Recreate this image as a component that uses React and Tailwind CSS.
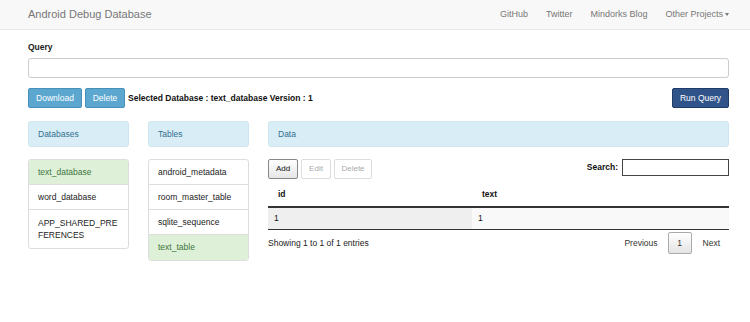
export default function App() {
  const font = { fontFamily: '"Liberation Sans", Arial, sans-serif' };
  return (
    <div className="w-[750px] h-[322px] bg-white text-[#333] text-[8.5px] overflow-hidden" style={font}>
      {/* navbar */}
      <nav className="h-[30px] bg-[#f8f8f8] border-b border-[#e7e7e7] flex items-center pl-[28px] pr-[21px]">
        <span className="text-[11px] text-[#777]">Android Debug Database</span>
        <div className="ml-auto flex items-center gap-[18px] text-[#777] text-[9px]">
          <span>GitHub</span>
          <span>Twitter</span>
          <span>Mindorks Blog</span>
          <span className="flex items-center gap-[2px]">
            Other Projects
            <span className="w-0 h-0 border-l-[2.5px] border-r-[2.5px] border-t-[3px] border-l-transparent border-r-transparent border-t-[#777]"></span>
          </span>
        </div>
      </nav>

      <div className="px-[28px] pr-[21px]">
        <div className="pt-[12px] font-bold text-[#222] leading-[10px]">Query</div>
        <div className="mt-[6px] h-[20px] border border-[#ccc] rounded-[3px] bg-white"></div>

        <div className="mt-[10px] flex items-center h-[20px]">
          <button className="h-[20px] w-[54px] bg-[#5ba7d0] border border-[#4790b9] rounded-[2px] text-white">Download</button>
          <button className="ml-[3px] h-[20px] w-[40px] bg-[#5ba7d0] border border-[#4790b9] rounded-[2px] text-white">Delete</button>
          <span className="ml-[3px] font-bold text-[#111]">Selected Database : text_database Version : 1</span>
          <button className="ml-auto h-[20px] w-[57px] bg-[#30538a] border border-[#1f3c68] rounded-[2px] text-white">Run Query</button>
        </div>

        <div className="mt-[13px] flex gap-[19px] items-start">
          {/* databases */}
          <div className="w-[101px]">
            <div className="h-[26px] bg-[#d9edf7] border border-[#cfe5f1] rounded-[3px] flex items-center px-[9px] text-[#31708f]">Databases</div>
            <div className="mt-[12px] border border-[#ddd] rounded-[3px] overflow-hidden">
              <div className="h-[25px] flex items-center px-[9px] bg-[#dff0d8] text-[#3c763d] border-b border-[#ddd]">text_database</div>
              <div className="h-[25px] flex items-center px-[9px] text-[#222] border-b border-[#ddd]">word_database</div>
              <div className="px-[9px] py-[7px] text-[#222] leading-[12px] break-all">APP_SHARED_PREFERENCES</div>
            </div>
          </div>

          {/* tables */}
          <div className="w-[101px]">
            <div className="h-[26px] bg-[#d9edf7] border border-[#cfe5f1] rounded-[3px] flex items-center px-[9px] text-[#31708f]">Tables</div>
            <div className="mt-[12px] border border-[#ddd] rounded-[3px] overflow-hidden">
              <div className="h-[25px] flex items-center px-[9px] text-[#222] border-b border-[#ddd]">android_metadata</div>
              <div className="h-[25px] flex items-center px-[9px] text-[#222] border-b border-[#ddd]">room_master_table</div>
              <div className="h-[25px] flex items-center px-[9px] text-[#222] border-b border-[#ddd]">sqlite_sequence</div>
              <div className="h-[25px] flex items-center px-[9px] bg-[#dff0d8] text-[#3c763d]">text_table</div>
            </div>
          </div>

          {/* data */}
          <div className="flex-1">
            <div className="h-[26px] bg-[#d9edf7] border border-[#cfe5f1] rounded-[3px] flex items-center px-[9px] text-[#31708f]">Data</div>
            <div className="mt-[12px] flex items-start">
              <button className="h-[20px] w-[30px] border border-[#888] rounded-[2px] bg-gradient-to-b from-white to-[#e6e6e6] text-[#111] text-[8px]">Add</button>
              <button className="ml-[3px] h-[20px] w-[30px] border border-[#ddd] rounded-[2px] bg-white text-[#aaa] text-[8px]">Edit</button>
              <button className="ml-[3px] h-[20px] w-[38px] border border-[#ddd] rounded-[2px] bg-white text-[#aaa] text-[8px]">Delete</button>
              <div className="ml-auto flex items-center h-[17px]">
                <span className="font-bold text-[#111]">Search:</span>
                <div className="ml-[4px] w-[107px] h-[17px] border-[1.5px] border-[#444] bg-white"></div>
              </div>
            </div>
            <div className="flex h-[29px] pt-[4px] items-center font-bold text-[#111] border-b-2 border-[#333]">
              <div className="w-[204px] pl-[10px]">id</div>
              <div className="pl-[10px]">text</div>
            </div>
            <div className="flex h-[22px] items-center text-[#111] border-b border-[#333]">
              <div className="w-[204px] h-full flex items-center pl-[6px] bg-[#efefef]">1</div>
              <div className="flex-1 h-full flex items-center pl-[6px] bg-[#f9f9f9]">1</div>
            </div>
            <div className="flex items-center mt-[2px]">
              <span className="text-[#222]">Showing 1 to 1 of 1 entries</span>
              <div className="ml-auto flex items-center text-[#333]">
                <span className="mr-[10px]">Previous</span>
                <span className="w-[24px] h-[22px] flex items-center justify-center border border-[#aaa] rounded-[2px] bg-gradient-to-b from-white to-[#e4e4e4]">1</span>
                <span className="ml-[11px] mr-[9px]">Next</span>
              </div>
            </div>
          </div>
        </div>
      </div>
    </div>
  );
}
